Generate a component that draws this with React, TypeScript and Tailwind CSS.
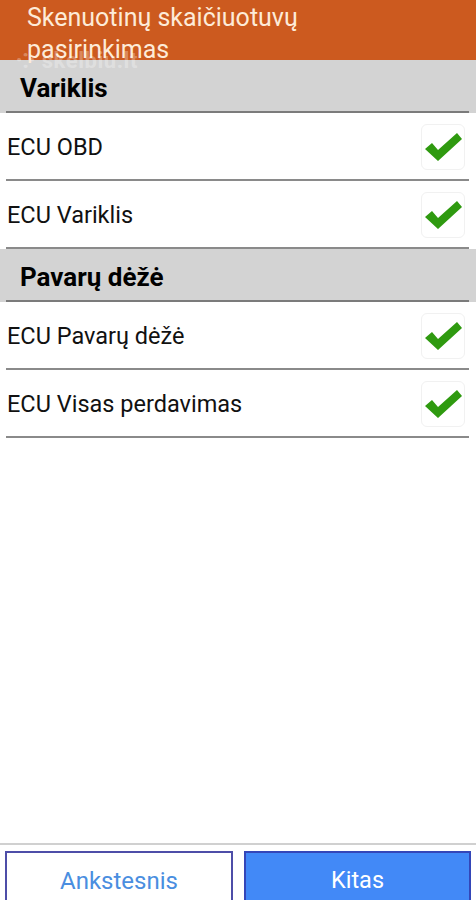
import React from "react";

function Check() {
  return (
    <div className="w-[44px] h-[46px] rounded-[6px] border border-[#f1f1f1] bg-white flex items-center justify-center">
      <svg width="40" height="34" viewBox="0 0 40 34">
        <polygon points="2,19 9,13 15,20 34,3 39,9 15,31" fill="#2f9a10" />
      </svg>
    </div>
  );
}

function Section({ title }: { title: string }) {
  return (
    <div className="bg-[#d3d3d3] h-[53px] flex items-center pl-[20px] relative">
      <span className="text-[26px] font-bold text-black leading-none pt-[2px]">{title}</span>
      <div className="absolute left-[6px] right-[7px] bottom-0 h-[2px] bg-[#7b7b7b]" />
    </div>
  );
}

function Row({ label }: { label: string }) {
  return (
    <div className="mx-[6px] mr-[7px] h-[68px] flex items-center justify-between border-b-2 border-[#8a8a8a]">
      <span className="pl-[1px] pt-[4px] text-[23.5px] text-[#111] leading-none">{label}</span>
      <div className="pr-[4px] pt-[2px]">
        <Check />
      </div>
    </div>
  );
}

export default function App() {
  return (
    <div
      className="w-[476px] h-[900px] bg-white flex flex-col overflow-hidden"
      style={{ fontFamily: "Roboto, 'Noto Sans', sans-serif" }}
    >
      <div className="h-[60px] bg-[#cc5a1f] relative z-10 shrink-0">
        <div className="pl-[27px] pt-[2px] text-[25px] leading-[32px] text-[#fdebd8]">
          Skenuotinų skaičiuotuvų
          <br />
          pasirinkimas
        </div>
        <div className="absolute left-[16px] top-[50px] text-[22px] leading-none text-white/30 font-bold tracking-wide">
          ⁘ skelbiu.lt
        </div>
      </div>
      <Section title="Variklis" />
      <Row label="ECU OBD" />
      <Row label="ECU Variklis" />
      <Section title="Pavarų dėžė" />
      <Row label="ECU Pavarų dėžė" />
      <Row label="ECU Visas perdavimas" />
      <div className="flex-1" />
      <div className="border-t-2 border-[#d0d0d0] pt-[6px] flex gap-[11px] px-[5px] h-[57px] shrink-0">
        <button className="w-[228px] h-[60px] border-2 border-[#4e4ea8] bg-white text-[#4a8ee0] text-[24px] flex items-center justify-center">
          Ankstesnis
        </button>
        <button className="w-[227px] h-[60px] border-2 border-[#3446b8] bg-[#4289f7] text-white text-[23.5px] flex items-center justify-center">
          Kitas
        </button>
      </div>
    </div>
  );
}
